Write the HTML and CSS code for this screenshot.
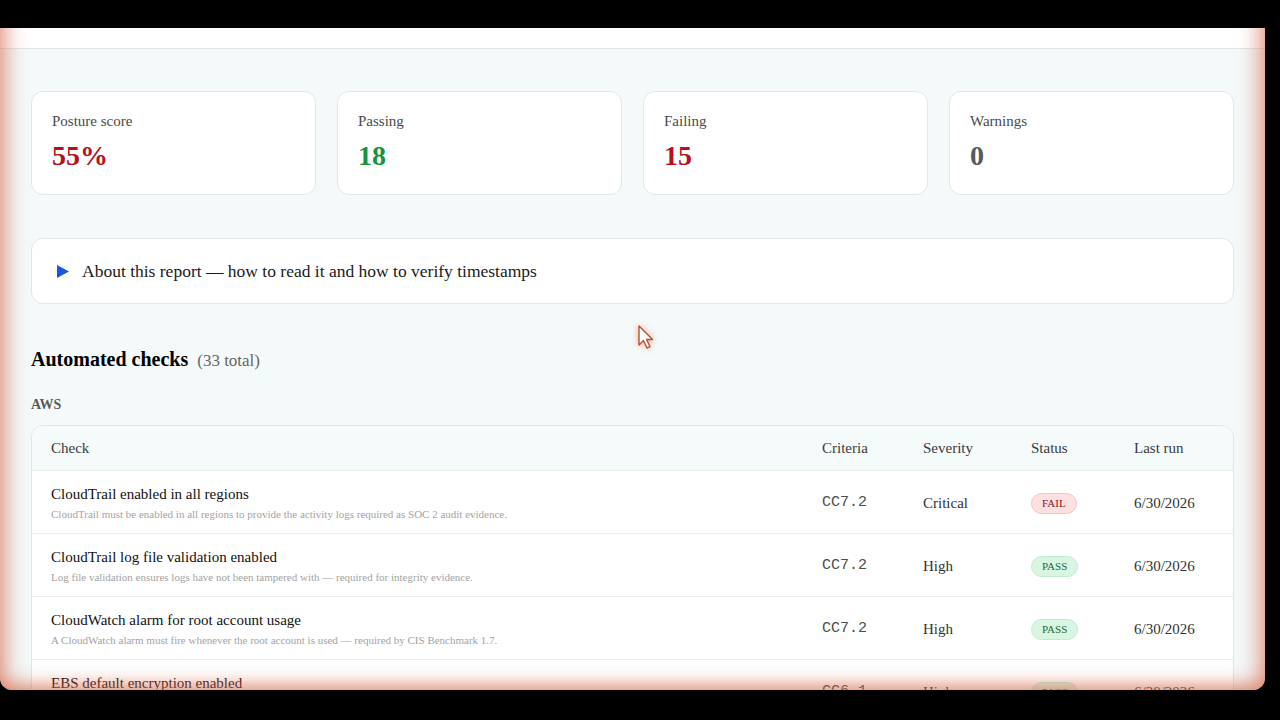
FILE: index.html
```html
<!DOCTYPE html>
<html>
<head>
    <title>SOC 2 Posture Report</title>
    <link rel="stylesheet" href="styles.css">
</head>
<body>
    <div class="screen">
        <div class="topbar"></div>

        <div class="container">
            <div class="stats">
                <div class="stat">
                    <div class="stat-label">Posture score</div>
                    <div class="stat-value red">55%</div>
                </div>
                <div class="stat">
                    <div class="stat-label">Passing</div>
                    <div class="stat-value green">18</div>
                </div>
                <div class="stat">
                    <div class="stat-label">Failing</div>
                    <div class="stat-value red">15</div>
                </div>
                <div class="stat">
                    <div class="stat-label">Warnings</div>
                    <div class="stat-value grey">0</div>
                </div>
            </div>

            <div class="about">
                <svg class="caret" width="12" height="13" viewBox="0 0 12 13"><path d="M0 0 L12 6.5 L0 13 Z" fill="#1a56db"/></svg>
                <span>About this report — how to read it and how to verify timestamps</span>
            </div>

            <h2 class="section-title">Automated checks <span class="count">(33 total)</span></h2>
            <div class="group-title">AWS</div>

            <div class="checks">
                <div class="row head">
                    <div>Check</div>
                    <div>Criteria</div>
                    <div>Severity</div>
                    <div>Status</div>
                    <div>Last run</div>
                </div>
                <div class="row">
                    <div>
                        <div class="check-name">CloudTrail enabled in all regions</div>
                        <div class="check-desc">CloudTrail must be enabled in all regions to provide the activity logs required as SOC 2 audit evidence.</div>
                    </div>
                    <div class="mono">CC7.2</div>
                    <div>Critical</div>
                    <div><span class="badge fail">FAIL</span></div>
                    <div>6/30/2026</div>
                </div>
                <div class="row">
                    <div>
                        <div class="check-name">CloudTrail log file validation enabled</div>
                        <div class="check-desc">Log file validation ensures logs have not been tampered with — required for integrity evidence.</div>
                    </div>
                    <div class="mono">CC7.2</div>
                    <div>High</div>
                    <div><span class="badge pass">PASS</span></div>
                    <div>6/30/2026</div>
                </div>
                <div class="row">
                    <div>
                        <div class="check-name">CloudWatch alarm for root account usage</div>
                        <div class="check-desc">A CloudWatch alarm must fire whenever the root account is used — required by CIS Benchmark 1.7.</div>
                    </div>
                    <div class="mono">CC7.2</div>
                    <div>High</div>
                    <div><span class="badge pass">PASS</span></div>
                    <div>6/30/2026</div>
                </div>
                <div class="row">
                    <div>
                        <div class="check-name">EBS default encryption enabled</div>
                        <div class="check-desc">EBS volumes must be encrypted by default to protect data at rest.</div>
                    </div>
                    <div class="mono">CC6.1</div>
                    <div>High</div>
                    <div><span class="badge pass">PASS</span></div>
                    <div>6/30/2026</div>
                </div>
            </div>
        </div>

        <svg class="cursor" width="22" height="28" viewBox="0 0 22 28"><path d="M3 2 L3 21 L7.5 16.5 L11 24 L14 22.7 L10.6 15.5 L16.5 15.5 Z" fill="#fff" stroke="#b5532f" stroke-width="1.4" stroke-linejoin="round"/></svg>
    </div>
</body>
</html>
```

FILE: styles.css
```css
html, body {
    margin: 0;
    background-color: #000;
}
body {
    padding-top: 28px;
    font-family: "Liberation Serif", "Times New Roman", serif;
    color: #1a1a1a;
}
.screen {
    position: relative;
    width: 1265px;
    height: 662px;
    overflow: hidden;
    background-color: #f4f9f9;
    border-radius: 0 0 12px 12px;
}
/* reddish glow round the recorded window (top edge hidden above the frame) */
.screen::after {
    content: "";
    position: absolute;
    top: -60px;
    left: 0;
    right: 0;
    bottom: 0;
    pointer-events: none;
    border-radius: 0 0 12px 12px;
    box-shadow: inset 10px 0 22px -4px rgba(215, 105, 75, 0.55),
                inset -10px 0 22px -4px rgba(215, 105, 75, 0.55),
                inset 0 -8px 20px -4px rgba(215, 105, 75, 0.45);
}
.topbar {
    height: 20px;
    background-color: #fff;
    border-bottom: 1px solid #e2e6e8;
}
.container {
    padding: 42px 31px 0;
}
.stats {
    display: grid;
    grid-template-columns: repeat(4, 1fr);
    gap: 21px;
}
.stat {
    background-color: #fff;
    border: 1px solid #e2e6e8;
    border-radius: 12px;
    padding: 19px 20px 21px;
}
.stat-label {
    font-size: 15px;
    line-height: 20px;
    color: #4a4a4a;
}
.stat-value {
    margin-top: 8px;
    font-size: 28px;
    line-height: 34px;
    font-weight: bold;
}
.red { color: #b8101a; }
.green { color: #16953d; }
.grey { color: #555b62; }

.about {
    display: flex;
    align-items: center;
    gap: 13px;
    margin-top: 43px;
    background-color: #fff;
    border: 1px solid #e2e6e8;
    border-radius: 12px;
    padding: 22px 25px;
    font-size: 17.5px;
    line-height: 20px;
}
.section-title {
    margin: 43px 0 0;
    font-size: 20px;
    line-height: 24px;
    font-weight: bold;
    color: #000;
}
.count {
    margin-left: 4px;
    font-size: 17px;
    font-weight: normal;
    color: #666;
}
.group-title {
    margin-top: 23px;
    font-size: 14px;
    line-height: 18px;
    font-weight: bold;
    color: #595959;
}
.checks {
    margin-top: 11px;
    background-color: #fff;
    border: 1px solid #e2e6e8;
    border-radius: 12px;
    overflow: hidden;
}
.row {
    display: grid;
    grid-template-columns: 771px 101px 108px 103px 118px;
    align-items: center;
    border-top: 1px solid #eceff0;
    padding: 13px 0 12px;
    font-size: 15px;
    line-height: 20px;
    color: #333;
}
.row > div {
    padding-left: 19px;
}
.row.head {
    border-top: none;
    background-color: #f5fafa;
    padding: 12px 0 12px;
    color: #3a3a3a;
}
.check-name {
    color: #111;
}
.check-desc {
    margin-top: 3px;
    font-size: 11px;
    line-height: 14px;
    color: #a3a3a3;
}
.mono {
    font-family: "Liberation Mono", "DejaVu Sans Mono", monospace;
    font-size: 15px;
    color: #4d4d4d;
}
.badge {
    display: inline-block;
    font-size: 11px;
    line-height: 15px;
    padding: 2px 10px;
    border-radius: 11px;
    border: 1px solid transparent;
}
.badge.fail {
    background-color: #fde1e1;
    border-color: #f3c2c2;
    color: #8a1620;
}
.badge.pass {
    background-color: #d9f6e2;
    border-color: #bfeccd;
    color: #1d6a3a;
}
.cursor {
    position: absolute;
    left: 636px;
    top: 296px;
    filter: drop-shadow(0 0 3px rgba(235, 110, 80, 0.6));
}
```
